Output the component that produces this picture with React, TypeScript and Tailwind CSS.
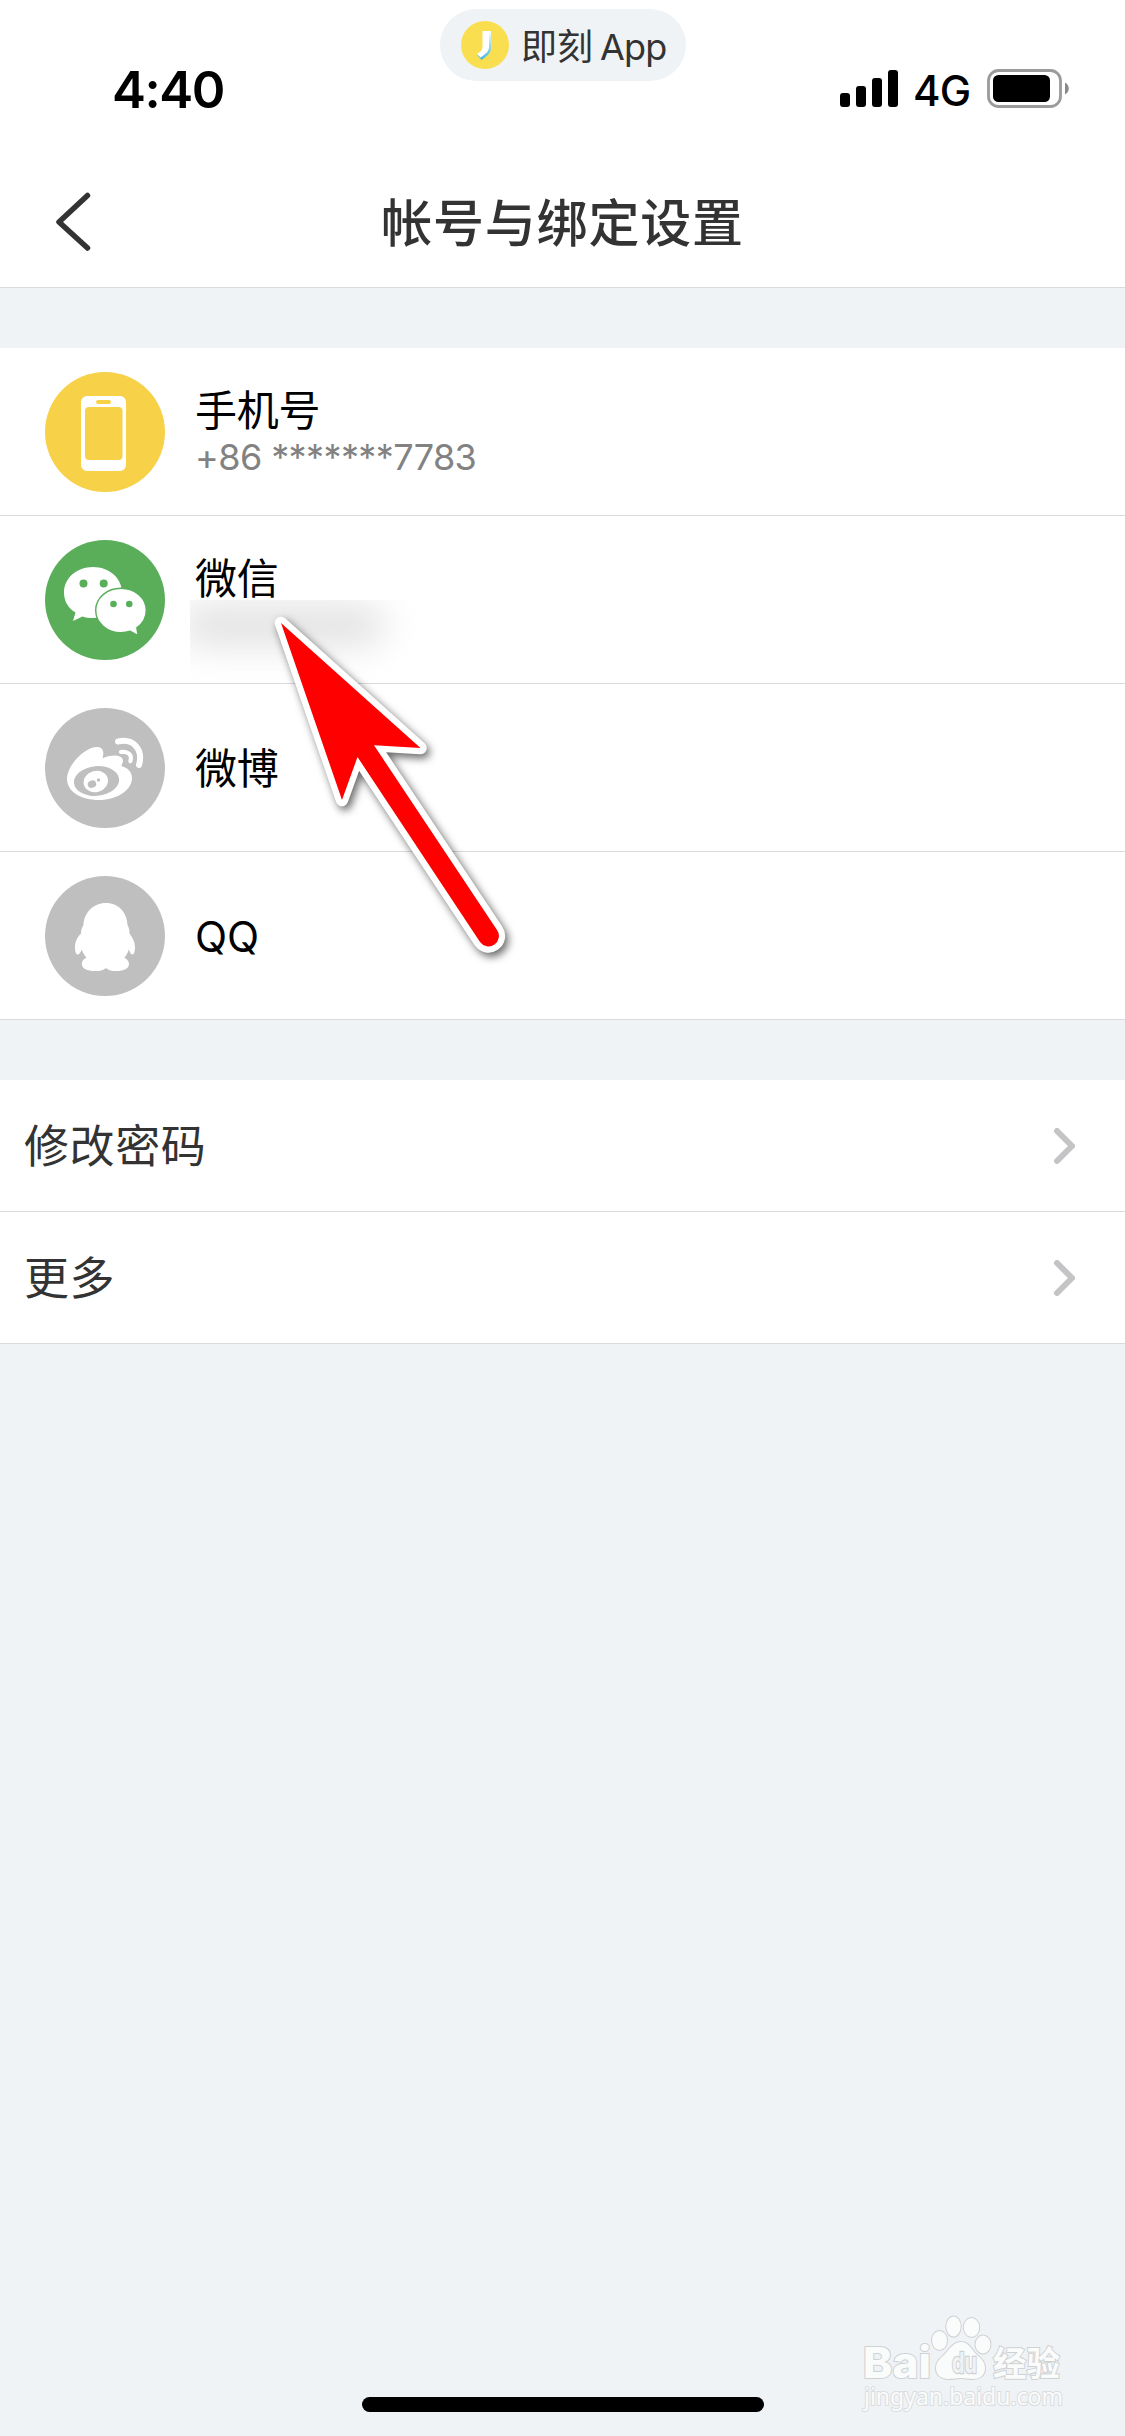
import type { ReactNode } from 'react'

type Account = {
  name: string
  detail?: string
  blurred?: boolean
  color: string
  icon: ReactNode
}

const PhoneIcon = () => (
  <svg viewBox="0 0 120 120" className="size-full">
    <path
      fill="#fff"
      fillRule="evenodd"
      d="M42 24h33a6 6 0 0 1 6 6v63a6 6 0 0 1-6 6H42a6 6 0 0 1-6-6V30a6 6 0 0 1 6-6Zm11 4a2 2 0 0 0 0 4h11a2 2 0 0 0 0-4ZM44 35a4 4 0 0 0-4 4v45a4 4 0 0 0 4 4h29.500a4 4 0 0 0 4-4V39a4 4 0 0 0-4-4Z"
    />
  </svg>
)

const WechatIcon = () => (
  <svg viewBox="0 0 120 120" className="size-full">
    <path fill="#fff" d="M48 27c16 0 29 11 29 25.500S64 78 48 78c-4 0-7.500-.6-10.500-1.600L28 81l2.500-8.500C23 68 19 61 19 52.500 19 38 32 27 48 27Z" />
    <path
      fill="#fff"
      stroke="#5aae59"
      strokeWidth="1.4"
      d="M76 48.300c14 0 25.300 9.700 25.300 22 0 7.200-3.700 13.500-9.500 17.500l1.400 7.900-8-4.500c-2.900 1-6 1.500-9.200 1.500-14 0-25.300-9.900-25.300-22.400s11.300-22 25.300-22Z"
    />
    <g fill="#5aae59">
      <circle cx="38.500" cy="43.500" r="4" />
      <circle cx="58.700" cy="43.500" r="4" />
      <circle cx="68.500" cy="64" r="3.300" />
      <circle cx="84.300" cy="64" r="3.300" />
    </g>
  </svg>
)

const WeiboIcon = () => (
  <svg viewBox="0 0 120 120" className="size-full">
    <path
      fill="#fff"
      d="M52 39c6 0 7.500 5 5.500 11.200 6-2.800 18-5 20.300 1.300.8 2.300-.9 4.500-1.500 6.500 6 1.800 10.700 5.500 10.700 12C87 82 72 92 54 92S22 83.500 22 71c0-14 18-32 30-32Z"
    />
    <ellipse cx="51.500" cy="73" rx="22.700" ry="14.800" transform="rotate(-5 51.500 73)" fill="#bfbfbf" />
    <ellipse cx="50.800" cy="73.500" rx="12.300" ry="10.500" transform="rotate(-15 50.800 73.500)" fill="#fff" />
    <ellipse cx="47" cy="76.200" rx="4.300" ry="3.600" transform="rotate(-20 47 76.200)" fill="#bfbfbf" />
    <circle cx="53.500" cy="72" r="1.700" fill="#bfbfbf" />
    <path
      fill="none"
      stroke="#fff"
      strokeWidth="6"
      strokeLinecap="round"
      d="M73 33.500C88 30 98.500 41 94 57"
    />
    <path
      fill="none"
      stroke="#fff"
      strokeWidth="4.200"
      strokeLinecap="round"
      d="M76 44c7-1.200 11.500 3 9.400 9.200"
    />
  </svg>
)

const QQIcon = () => (
  <svg viewBox="0 0 120 120" className="size-full">
    <path
      fill="#fff"
      d="M61 27c13 0 21 10 21.500 22 1.500 2.500 2 5 2 8.500 3.500 4.500 5.500 9 5.500 13.500 0 4.500-1 7.500-2.500 7.500S85 76.500 83.800 73.500c-1 3.500-2.500 6-4.500 8.200 3 1.600 4.700 3.600 4.700 6.300 0 4.500-5 7-13 7-4.500 0-7.500-.8-9-2.600h-2c-1.800 1.800-5 2.600-9.500 2.600-8.500 0-13.700-2.500-13.700-7 0-3 1.700-5 4.700-6.300-2-2.200-3.600-4.700-4.700-8.200-1 3-2.800 5-4.300 5S30 75.500 30 71c0-5 2.500-10.500 6-13.500 0-3.500.8-6 2.500-8.500C39 37 48 27 61 27Z"
    />
  </svg>
)

const accounts: Account[] = [
  { name: '手机号', detail: '+86 *******7783', color: 'bg-[#f7d148]', icon: <PhoneIcon /> },
  { name: '微信', blurred: true, color: 'bg-[#5aae59]', icon: <WechatIcon /> },
  { name: '微博', color: 'bg-[#bfbfbf]', icon: <WeiboIcon /> },
  { name: 'QQ', color: 'bg-[#bfbfbf]', icon: <QQIcon /> },
]

const settings = ['修改密码', '更多']

function StatusBar() {
  return (
    <div className="relative flex h-[156px] items-start justify-between pt-[69px] pr-[56px] pl-[112px]">
      <div className="mt-[-5px] text-[51px] leading-[51px] font-semibold tracking-[-1.5px] text-black">4:40</div>

      {/* Floating "back to app" pill */}
      <div className="absolute top-[9px] left-[440px] flex h-[72px] w-[246px] items-center rounded-full bg-[#eff3f6] pl-[21px]">
        <svg viewBox="0 0 48 48" className="size-12">
          <defs>
            <linearGradient id="jike" x1="0" y1="0" x2="0" y2="1">
              <stop offset="0" stopColor="#fff" />
              <stop offset="0.700" stopColor="#6fcbe8" />
              <stop offset="1" stopColor="#4db4dd" />
            </linearGradient>
          </defs>
          <circle cx="24" cy="24" r="24" fill="#f9df4f" />
          <path fill="url(#jike)" d="M22 10h8v17c0 5-4 8-9.500 12l-4.500-5c4-2.500 6-4 6-8Z" />
          <path fill="#fff" d="M21.500 10H28v16c0 4.500-3.500 7-8.500 10.500L16 33c4-2.500 5.500-4 5.500-8Z" />
        </svg>
        <span className="mt-[3px] ml-3 text-[36px] leading-[48px] whitespace-nowrap text-[#333]">
          即刻<span className="ml-[7px] tracking-[-0.8px]">App</span>
        </span>
      </div>

      <div className="flex items-start">
        <svg viewBox="0 0 58 38" className="mt-px h-[38px] w-[58px]">
          <rect x="0" y="23" width="10" height="14" rx="3" />
          <rect x="16" y="16" width="10" height="21" rx="3" />
          <rect x="32" y="8" width="10" height="29" rx="3" />
          <rect x="48" y="0" width="10" height="37" rx="3" />
        </svg>
        <span className="mt-px ml-[15px] w-[74px] text-[42px] leading-[42px] font-medium tracking-[-0.8px] whitespace-nowrap text-black">4G</span>
        <svg viewBox="0 0 82 39" className="h-[39px] w-[82px]">
          <rect x="1.500" y="1.500" width="72" height="36" rx="10" fill="none" stroke="#9b9b9b" strokeWidth="2.800" />
          <rect x="6" y="6" width="57" height="27" rx="5.500" />
          <path d="M78 13.500c5 2.500 5 9.500 0 12Z" fill="#8a8a8a" />
        </svg>
      </div>
    </div>
  )
}

function AccountRow({ name, detail, blurred, color, icon }: Account) {
  return (
    <div className="flex h-[168px] items-center border-b border-[#d9dadc] bg-white pl-[45px]">
      <div className={`size-[120px] shrink-0 rounded-full ${color}`}>{icon}</div>
      <div className="relative ml-[30px] pt-0.5">
        <div className="text-[42px] leading-[50px] tracking-[-0.2px] text-black">{name}</div>
        {detail && <div className="text-[36px] leading-[43px] tracking-[-0.6px] text-[#828282]">{detail}</div>}
        {/* the nickname is hidden behind a smudge */}
        {blurred && (
          <div className="h-[43px]">
            <div className="absolute top-[48px] left-[-5px] h-[80px] w-[235px] overflow-hidden">
              <div className="mt-[4px] ml-[-10px] h-[42px] w-[205px] rounded-full bg-[#e2e2e2] blur-[18px]" />
            </div>
          </div>
        )}
      </div>
    </div>
  )
}

function SettingRow({ label }: { label: string }) {
  return (
    <div className="flex h-[132px] items-center justify-between border-b border-[#d9dadc] bg-white pr-[50px] pl-6">
      <span className="pt-0.5 text-[45px] leading-[60px] tracking-[0.6px] text-[#333]">{label}</span>
      <svg viewBox="0 0 22 36" className="h-9 w-[22px]" fill="none" stroke="#c4c4c6" strokeWidth="6" strokeLinecap="round" strokeLinejoin="round">
        <path d="m4 3 15 15L4 33" />
      </svg>
    </div>
  )
}

function Pointer() {
  return (
    <svg viewBox="0 0 300 400" className="absolute top-[580px] left-[240px] h-[400px] w-[300px] drop-shadow-[3px_4px_4px_rgba(0,0,0,0.6)]">
      <path
        fill="#f00"
        stroke="#fff"
        strokeWidth="12.500"
        strokeLinejoin="round"
        paintOrder="stroke"
        d="M41 43 180.500 168l-46.500-2.700L257 350a10 10 0 0 1-17 12L117.500 177 102 220Z"
      />
    </svg>
  )
}

function Watermark() {
  return (
    <svg viewBox="0 0 305 146" className="absolute top-[2290px] left-[820px] h-[146px] w-[305px]" fill="#fafbfb" stroke="#cfd1d3" strokeWidth="2" paintOrder="stroke">
      <text x="43" y="87.500" fontSize="43" fontWeight="800" textLength="68" lengthAdjust="spacingAndGlyphs" fontFamily="Inter">
        Bai
      </text>
      <ellipse cx="119.500" cy="50.500" rx="7.500" ry="9.500" />
      <ellipse cx="133.500" cy="36.500" rx="7.200" ry="10" />
      <ellipse cx="151.500" cy="37.500" rx="7.700" ry="9.500" />
      <ellipse cx="163" cy="54.500" rx="7.500" ry="9" />
      <path d="M141 52c7 0 10 6 14 11 5 5 10 8 10 15 0 8-6 11-12 11-5 0-8-1-12-1s-8 1-13 1c-7 0-12-4-12-11s5-10 10-15c4-5 8-11 15-11Z" />
      <text x="132" y="83" fontSize="28" fontWeight="700" fill="#f0f2f3" strokeWidth="2.500" textLength="25" lengthAdjust="spacingAndGlyphs" fontFamily="Inter">
        du
      </text>
      <text x="173" y="86" fontSize="34" fontWeight="700" textLength="67" lengthAdjust="spacingAndGlyphs" fontFamily="Noto Sans CJK SC">
        经验
      </text>
      <text x="44" y="115" fontSize="23" stroke="#dadddf" textLength="199" lengthAdjust="spacingAndGlyphs" fontFamily="Noto Sans">
        jingyan.baidu.com
      </text>
    </svg>
  )
}

export default function App() {
  return (
    <div className="relative flex h-[2436px] w-[1125px] flex-col overflow-hidden bg-[#eff3f6] font-['Inter','Noto_Sans_CJK_SC',sans-serif]">
      <header className="h-[288px] border-b border-[#d9dadc] bg-white">
        <StatusBar />
        <div className="grid h-[131px] grid-cols-[1fr_auto_1fr] items-center px-[55px]">
          <svg viewBox="0 0 38 60" className="h-[60px] w-[38px]" fill="none" stroke="#333" strokeWidth="5.500" strokeLinecap="round" strokeLinejoin="round">
            <path d="M32.500 3.500 4 30l28.500 26" />
          </svg>
          <h1 className="pt-1 text-[51px] leading-[70px] font-medium tracking-[0.8px] text-[#333]">帐号与绑定设置</h1>
        </div>
      </header>

      <section className="mt-[60px]">
        {accounts.map((account) => (
          <AccountRow key={account.name} {...account} />
        ))}
      </section>

      <section className="mt-[60px]">
        {settings.map((label) => (
          <SettingRow key={label} label={label} />
        ))}
      </section>

      {/* Home indicator */}
      <div className="mx-auto mt-auto mb-6 h-[15px] w-[402px] rounded-full bg-black" />

      <Pointer />
      <Watermark />
    </div>
  )
}
